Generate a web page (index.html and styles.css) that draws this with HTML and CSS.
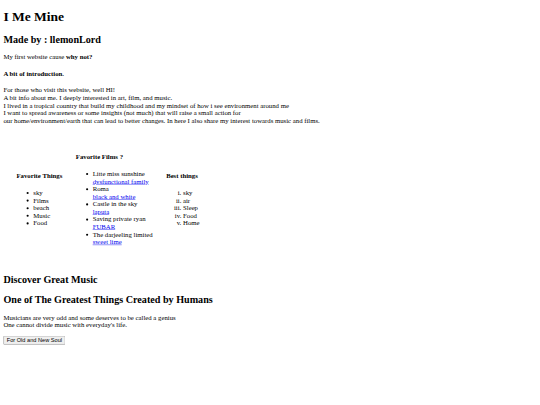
FILE: index.html
```html
<!DOCTYPE html>
<html>
<head>
<meta charset="utf-8">
<title>I Me Mine</title>
<link rel="stylesheet" href="styles.css">
</head>
<body>
<div class="page">
<div class="content">
<h1>I Me Mine</h1>
<h2>Made by : llemonLord</h2>
<p>My first website cause <b>why not?</b></p>
<h4>A bit of introduction.</h4>
<p>For those who visit this website, well HI!<br>
A bit info about me. I deeply interested in art, film, and music.<br>
I lived in a tropical country that build my childhood and my mindset of how i see environment around me<br>
I want to spread awareness or some insights (not much) that will raise a small action for<br>
our home/environment/earth that can lead to better changes. In here I also share my interest towards music and films.</p>
<table class="favs">
<tr>
<td>
<h4>Favorite Things</h4>
<ul>
<li>sky</li>
<li>Films</li>
<li>beach</li>
<li>Music</li>
<li>Food</li>
</ul>
</td>
<td>
<h4>Favorite Films ?</h4>
<ul>
<li>Litte miss sunshine<br><a href="#">dysfunctional family</a></li>
<li>Roma<br><a href="#">black and white</a></li>
<li>Castle in the sky<br><a href="#">laputa</a></li>
<li>Saving private ryan<br><a href="#">FUBAR</a></li>
<li>The darjeeling limited<br><a href="#">sweet lime</a></li>
</ul>
</td>
<td>
<h4>Best things</h4>
<ol type="i">
<li>sky</li>
<li>air</li>
<li>Sleep</li>
<li>Food</li>
<li>Home</li>
</ol>
</td>
</tr>
</table>
<h2>Discover Great Music</h2>
<h2>One of The Greatest Things Created by Humans</h2>
<p>Musicians are very odd and some deserves to be called a genius<br>
One cannot divide music with everyday's life.</p>
<button class="soul">For Old and New Soul</button>
</div>
</div>
</body>
</html>
```
FILE: styles.css
```css
html, body {
  margin: 0;
  overflow: hidden;
  background: #fff;
}
.page {
  display: flow-root;
  width: 1280px;
  transform: scale(0.421875);
  transform-origin: 0 0;
  font-family: "Liberation Serif", "Times New Roman", serif;
  font-size: 16px;
  color: #000;
}
.content {
  margin: 8px;
}
a {
  color: #0000ee;
}
.favs {
  border-spacing: 30px;
}
.favs td {
  padding: 1px;
}
.soul {
  font-family: "Liberation Sans", Arial, sans-serif;
  font-size: 13.333px;
}
```
